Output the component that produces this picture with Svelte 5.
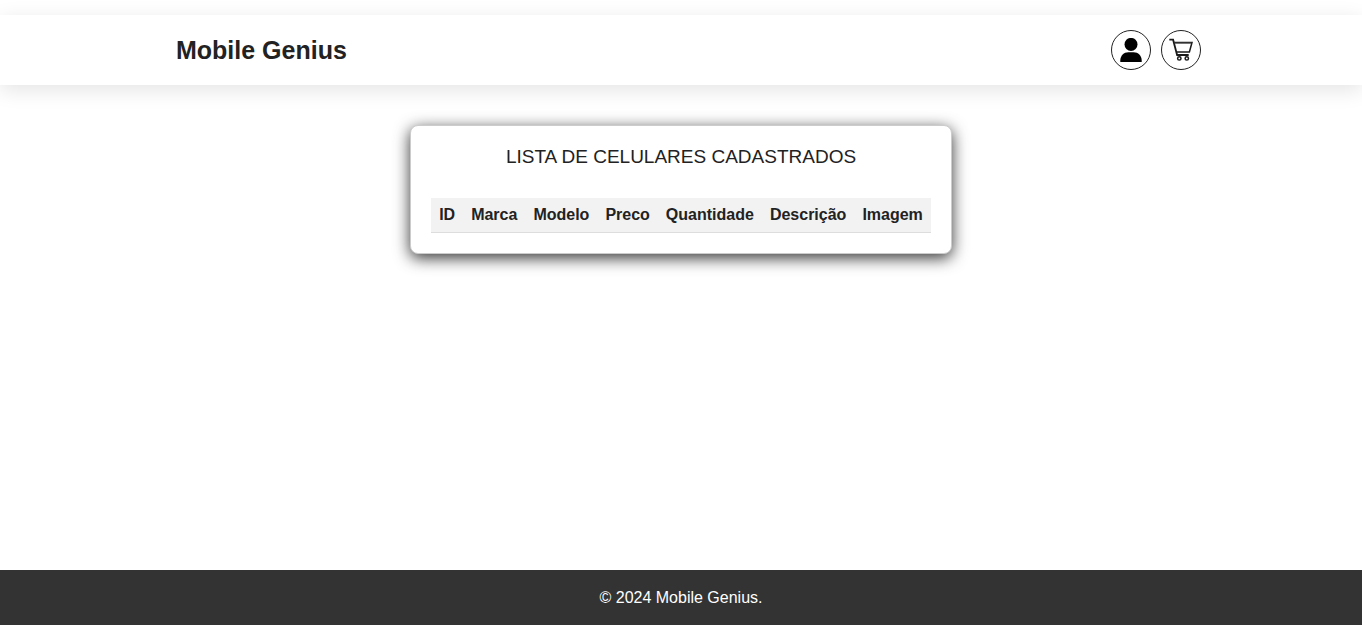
<script>
  const columns = ['ID', 'Marca', 'Modelo', 'Preco', 'Quantidade', 'Descrição', 'Imagem'];
  const phones = [];
</script>

<div class="page">
  <header>
    <div class="bar">
      <h1>Mobile Genius</h1>
      <nav>
        <a href="#conta" aria-label="Conta">
          <svg width="24" height="24" viewBox="0 0 24 24" fill="#000">
            <circle cx="12" cy="6.4" r="6.5" />
            <path d="M1.300 24v-1.500c0-5 3.600-8.300 8-8.300h5.400c4.400 0 8 3.300 8 8.300V24z" />
          </svg>
        </a>
        <a href="#carrinho" aria-label="Carrinho">
          <svg width="24" height="24" viewBox="0 0 24 24" fill="none" stroke="#1a1a1a" stroke-width="1.500">
            <path d="M0.300 1.700h3.800l4 15.300h11.600" stroke-width="1.800" />
            <path d="M4.700 4.500h18.300l-2.600 9.500H7.500" />
            <path d="M5 4.800h17.500" stroke="#333" />
            <circle cx="10.300" cy="20.400" r="1.700" />
            <circle cx="17.800" cy="20.400" r="1.700" />
          </svg>
        </a>
      </nav>
    </div>
  </header>

  <main>
    <section class="card">
      <h2>LISTA DE CELULARES CADASTRADOS</h2>
      <table>
        <thead>
          <tr>
            {#each columns as column}
              <th scope="col">{column}</th>
            {/each}
          </tr>
        </thead>
        <tbody>
          {#each phones as phone}
            <tr>
              {#each phone as value}
                <td>{value}</td>
              {/each}
            </tr>
          {/each}
        </tbody>
      </table>
    </section>
  </main>

  <footer>© 2024 Mobile Genius.</footer>
</div>

<style>
  .page {
    display: flex;
    flex-direction: column;
    box-sizing: border-box;
    min-height: 100vh;
    padding-top: 15px;
    background: #fff;
    color: #222;
    font-family: "Liberation Sans", Arial, sans-serif;
    font-size: 16px;
  }
  header {
    padding: 15px;
    background: #fff;
    box-shadow: 0 5px 20px rgba(0, 0, 0, 0.11);
  }
  .bar {
    display: flex;
    align-items: center;
    justify-content: space-between;
    box-sizing: border-box;
    max-width: 1040px;
    margin: 0 auto;
    padding-left: 15px;
  }
  h1 {
    margin: 0;
    font-size: 25px;
    line-height: 30px;
  }
  nav {
    display: flex;
    gap: 10px;
  }
  nav a {
    display: flex;
    align-items: center;
    justify-content: center;
    box-sizing: border-box;
    width: 40px;
    height: 40px;
    border: 1px solid #222;
    border-radius: 50%;
  }
  main {
    flex: 1;
    padding: 40px 20px;
  }
  .card {
    box-sizing: border-box;
    width: fit-content;
    margin: 0 auto;
    padding: 20px;
    border: 1px solid #ccc;
    border-radius: 8px;
    background: #fff;
    box-shadow: 0 4px 16px rgba(0, 0, 0, 0.8);
  }
  h2 {
    margin: 0;
    font-size: 19px;
    font-weight: 400;
    line-height: 22px;
    text-align: center;
  }
  table {
    margin-top: 30px;
    border-collapse: collapse;
  }
  th,
  td {
    padding: 8px;
    border-bottom: 1px solid #ddd;
    line-height: 18px;
    text-align: left;
  }
  th {
    background: #f2f2f2;
  }
  footer {
    padding: 19px 20px 18px;
    background: #333;
    color: #fff;
    line-height: 18px;
    text-align: center;
  }
</style>
